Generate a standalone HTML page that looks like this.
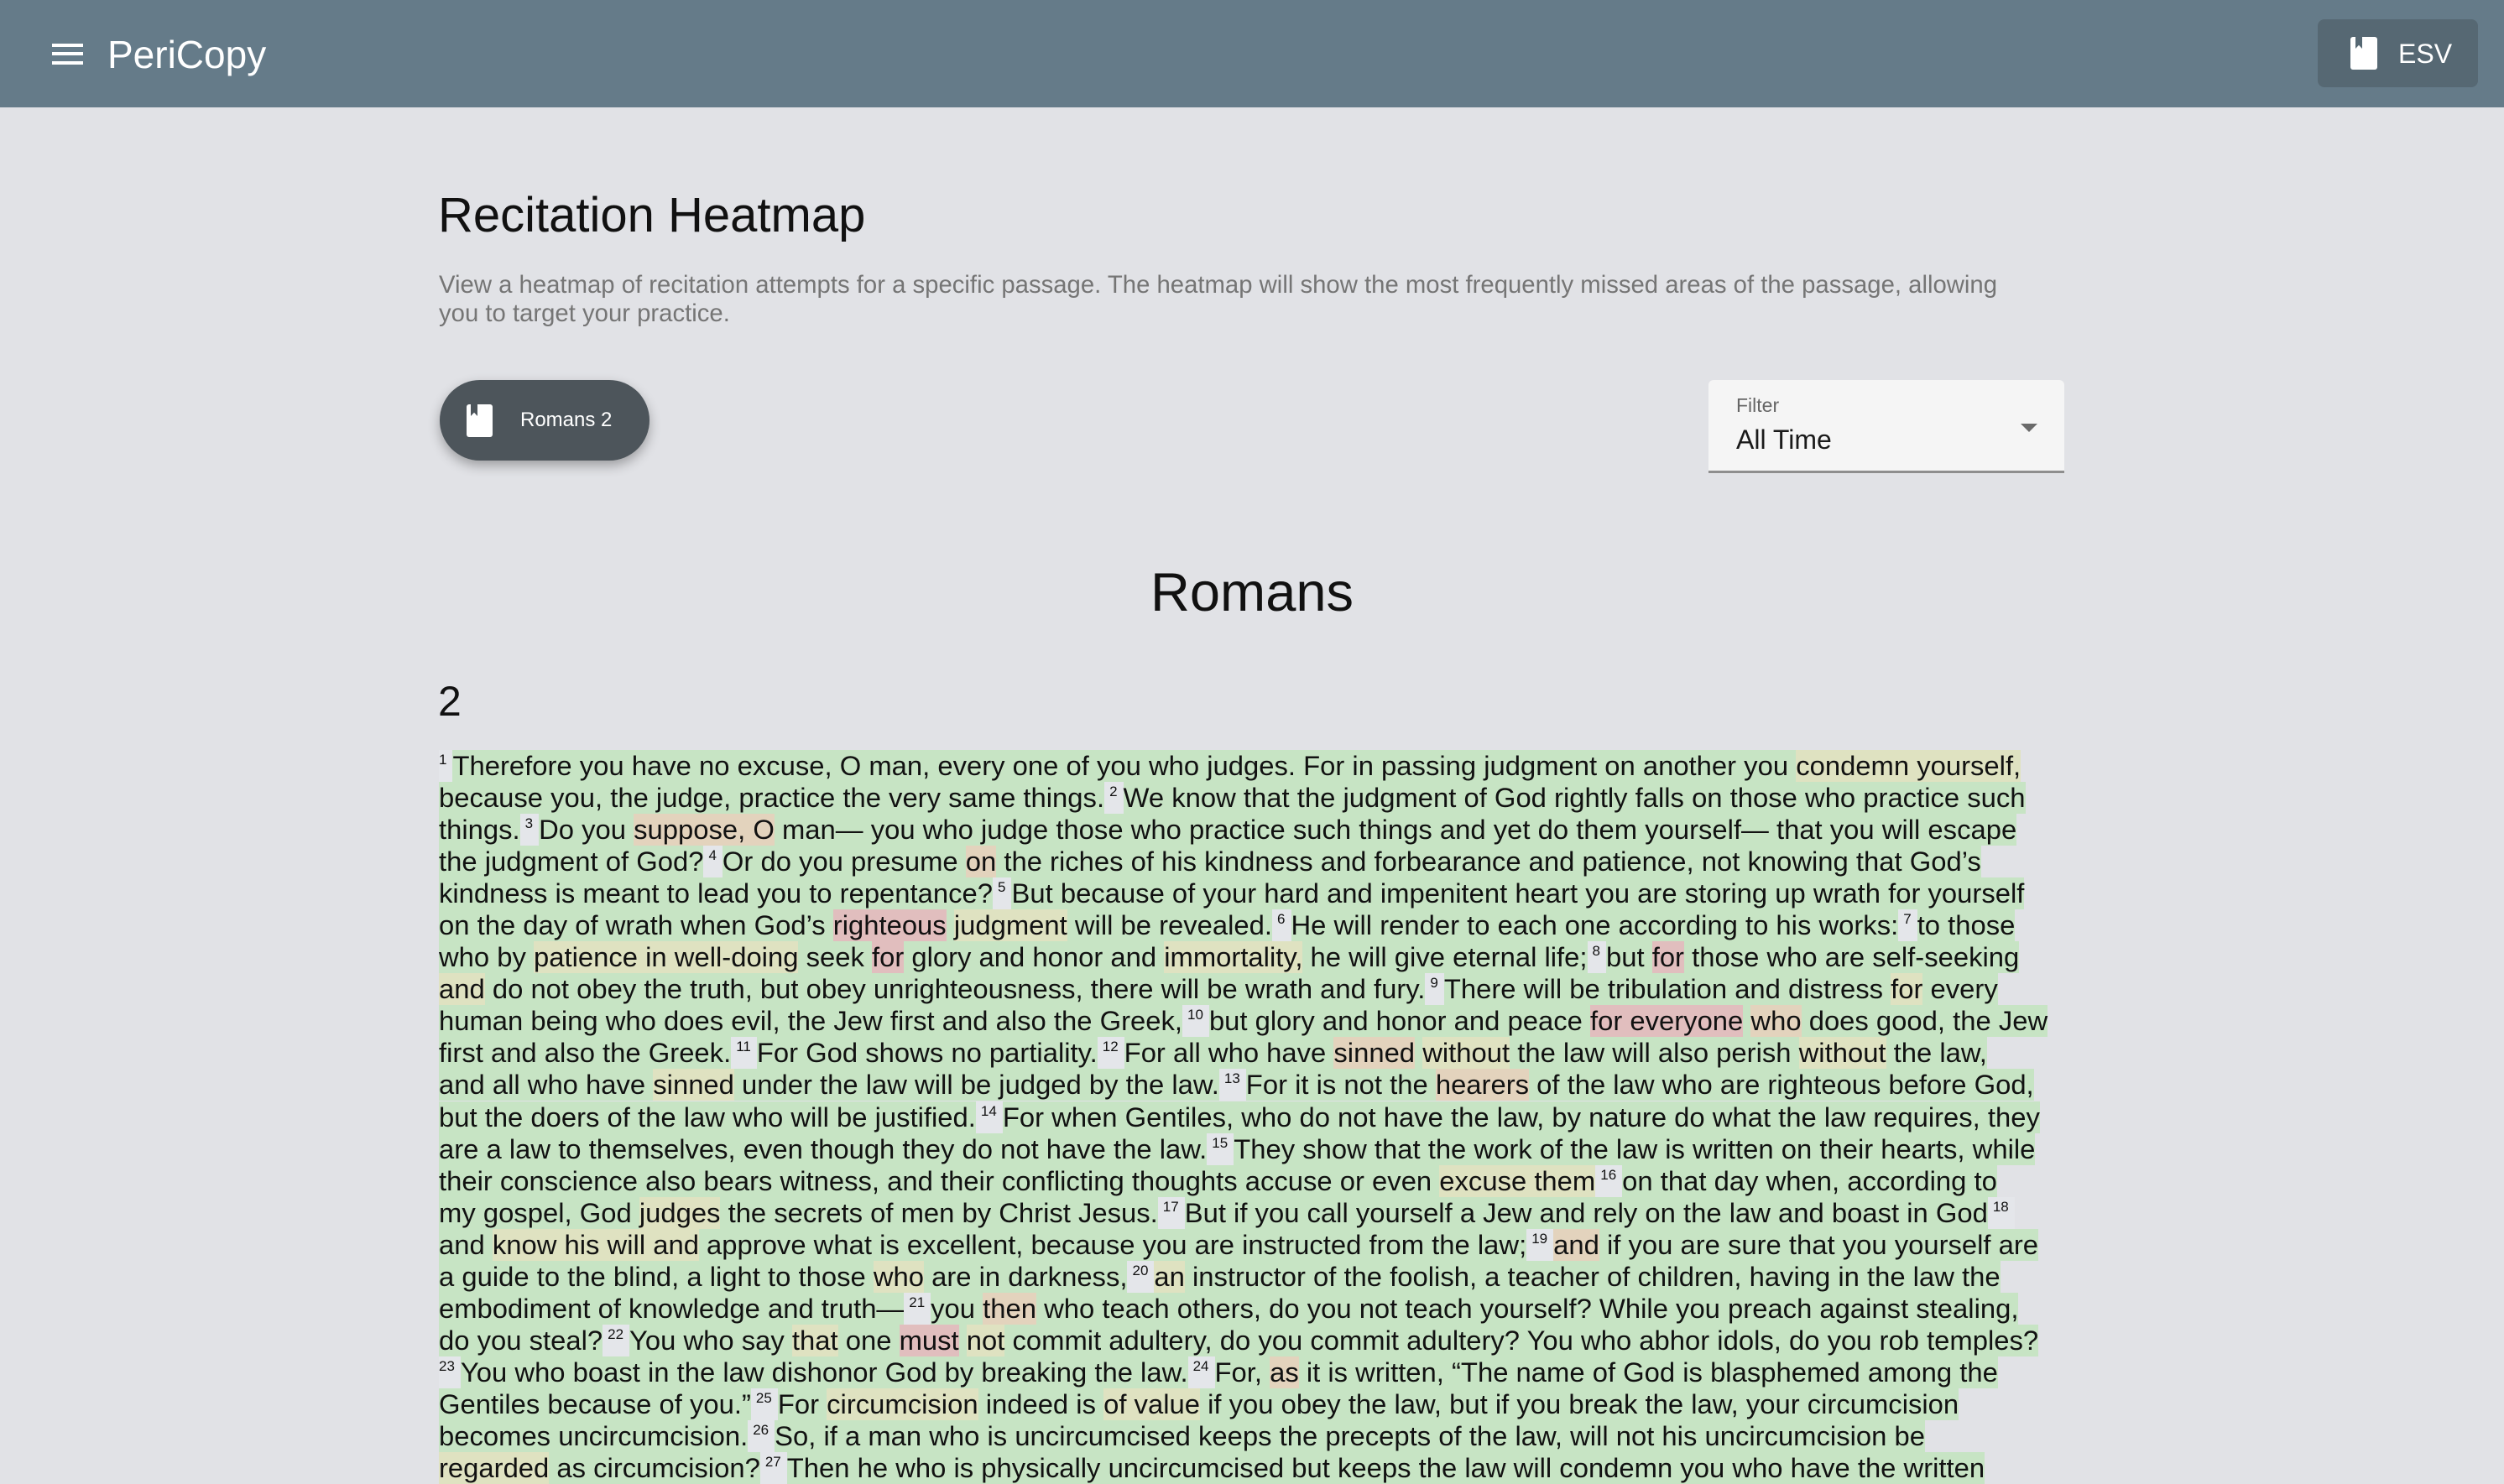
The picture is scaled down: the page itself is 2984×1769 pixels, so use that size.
<!DOCTYPE html>
<html><head><meta charset="utf-8">
<style>
*{margin:0;padding:0;box-sizing:border-box}
html,body{width:2984px;height:1768px;overflow:hidden;background:#e1e2e6;font-family:"Liberation Sans",sans-serif;color:#111}
.hdr{position:absolute;left:0;top:0;width:2984px;height:128px;background:#657b89}
.ham{position:absolute;left:62px;width:37px;height:4px;background:#fff}
.logo{position:absolute;left:128px;top:37px;font-size:46px;color:#fff;line-height:56px}
.esv{position:absolute;left:2762px;top:23px;width:191px;height:81px;background:#566873;border-radius:8px}
.esv .ic{position:absolute;left:39px;top:21px;width:32px;height:39px;background:#fff;border-radius:3px}
.esv .bm{position:absolute;left:6px;top:0;width:8px;height:14px;background:#566873;clip-path:polygon(0 0,100% 0,100% 100%,50% 70%,0 100%)}
.esv .tx{position:absolute;left:96px;top:22px;font-size:32px;color:#fff;line-height:38px}
h1{position:absolute;left:522px;top:222px;font-size:58px;font-weight:normal;line-height:70px;color:#111}
.desc{position:absolute;left:523px;top:323px;width:2000px;font-size:29.3px;line-height:34px;color:#757575;white-space:nowrap}
.btn{position:absolute;left:524px;top:453px;width:250px;height:96px;border-radius:48px;background:#4d555b;box-shadow:0 6px 14px rgba(0,0,0,.3)}
.btn .ic{position:absolute;left:32px;top:29px;width:31px;height:39px;background:#fff;border-radius:3px}
.btn .bm{position:absolute;left:5px;top:0;width:8px;height:14px;background:#4d555b;clip-path:polygon(0 0,100% 0,100% 100%,50% 70%,0 100%)}
.btn .tx{position:absolute;left:96px;top:34px;font-size:24px;color:#fff;line-height:28px}
.flt{position:absolute;left:2036px;top:453px;width:424px;height:111px;background:#f5f5f5;border-radius:6px 6px 0 0;border-bottom:3px solid #8e8e8e}
.flt .lb{position:absolute;left:33px;top:17px;font-size:23px;color:#666}
.flt .vl{position:absolute;left:33px;top:53px;font-size:32px;color:#1a1a1a}
.flt .ar{position:absolute;left:372px;top:52px;width:0;height:0;border-left:10px solid transparent;border-right:10px solid transparent;border-top:10px solid #6a6a6a}
.bk{position:absolute;left:0;width:2984px;top:666px;text-align:center;font-size:65px;line-height:80px}
.ch{position:absolute;left:522px;top:804px;font-size:50px;line-height:64px}
.txt{position:absolute;left:523px;top:894px;font-size:32.8px}
.l{height:38.05px;line-height:38px;white-space:nowrap}
.t{display:inline-block;height:38px;background:#c7e4c4;vertical-align:top}
.y{display:inline-block;height:38px;background:#dfe2c1}
.o{display:inline-block;height:38px;background:#e3d3bd}
.r{display:inline-block;height:38px;background:#e1bebe}
.v{display:inline-block;height:38px;background:#e4e6ea;font-size:17px;line-height:24px;vertical-align:top;padding:0 7px 0 6px}
.l>.v:first-child{padding-left:0}
</style></head><body>
<div class="hdr">
<div class="ham" style="top:52px"></div><div class="ham" style="top:62px"></div><div class="ham" style="top:73px"></div>
<div class="logo">PeriCopy</div>
<div class="esv"><div class="ic"><div class="bm"></div></div><div class="tx">ESV</div></div>
</div>
<h1>Recitation Heatmap</h1>
<div class="desc">View a heatmap of recitation attempts for a specific passage. The heatmap will show the most frequently missed areas of the passage, allowing<br>you to target your practice.</div>
<div class="btn"><div class="ic"><div class="bm"></div></div><div class="tx">Romans 2</div></div>
<div class="flt"><div class="lb">Filter</div><div class="vl">All Time</div><div class="ar"></div></div>
<div class="bk">Romans</div>
<div class="ch">2</div>
<div class="txt">
<div class="l"><span class="v">1</span><span class="t">Therefore you have no excuse, O man, every one of you who judges. For in passing judgment on another you <span class="y">condemn yourself,</span></span></div>
<div class="l"><span class="t">because you, the judge, practice the very same things.</span><span class="v">2</span><span class="t">We know that the judgment of God rightly falls on those who practice such</span></div>
<div class="l"><span class="t">things.</span><span class="v">3</span><span class="t">Do you <span class="o">suppose, O</span> man— you who judge those who practice such things and yet do them yourself— that you will escape</span></div>
<div class="l"><span class="t">the judgment of God?</span><span class="v">4</span><span class="t">Or do you presume <span class="o">on</span> the riches of his kindness and forbearance and patience, not knowing that God’s</span></div>
<div class="l"><span class="t">kindness is meant to lead you to repentance?</span><span class="v">5</span><span class="t">But because of your hard and impenitent heart you are storing up wrath for yourself</span></div>
<div class="l"><span class="t">on the day of wrath when God’s <span class="r">righteous</span> <span class="y">judgment</span> will be revealed.</span><span class="v">6</span><span class="t">He will render to each one according to his works:</span><span class="v">7</span><span class="t">to those</span></div>
<div class="l"><span class="t">who by <span class="y">patience in well-doing</span> seek <span class="r">for</span> glory and honor and <span class="y">immortality,</span> he will give eternal life;</span><span class="v">8</span><span class="t">but <span class="r">for</span> those who are self-seeking</span></div>
<div class="l"><span class="t"><span class="y">and</span> do not obey the truth, but obey unrighteousness, there will be wrath and fury.</span><span class="v">9</span><span class="t">There will be tribulation and distress <span class="y">for</span> every</span></div>
<div class="l"><span class="t">human being who does evil, the Jew first and also the Greek,</span><span class="v">10</span><span class="t">but glory and honor and peace <span class="r">for everyone</span> <span class="o">who</span> does good, the Jew</span></div>
<div class="l"><span class="t">first and also the Greek.</span><span class="v">11</span><span class="t">For God shows no partiality.</span><span class="v">12</span><span class="t">For all who have <span class="o">sinned</span> <span class="y">without</span> the law will also perish <span class="y">without</span> the law,</span></div>
<div class="l"><span class="t">and all who have <span class="y">sinned</span> under the law will be judged by the law.</span><span class="v">13</span><span class="t">For it is not the <span class="o">hearers</span> of the law who are righteous before God,</span></div>
<div class="l"><span class="t">but the doers of the law who will be justified.</span><span class="v">14</span><span class="t">For when Gentiles, who do not have the law, by nature do what the law requires, they</span></div>
<div class="l"><span class="t">are a law to themselves, even though they do not have the law.</span><span class="v">15</span><span class="t">They show that the work of the law is written on their hearts, while</span></div>
<div class="l"><span class="t">their conscience also bears witness, and their conflicting thoughts accuse or even <span class="y">excuse them</span></span><span class="v">16</span><span class="t">on that day when, according to</span></div>
<div class="l"><span class="t">my gospel, God <span class="y">judges</span> the secrets of men by Christ Jesus.</span><span class="v">17</span><span class="t">But if you call yourself a Jew and rely on the law and boast in God</span><span class="v">18</span></div>
<div class="l"><span class="t">and <span class="y">know his will and</span> approve what is excellent, because you are instructed from the law;</span><span class="v">19</span><span class="t"><span class="o">and</span> if you are sure that you yourself are</span></div>
<div class="l"><span class="t">a guide to the blind, a light to those <span class="y">who</span> are in darkness,</span><span class="v">20</span><span class="t"><span class="y">an</span> instructor of the foolish, a teacher of children, having in the law the</span></div>
<div class="l"><span class="t">embodiment of knowledge and truth—</span><span class="v">21</span><span class="t">you <span class="o">then</span> who teach others, do you not teach yourself? While you preach against stealing,</span></div>
<div class="l"><span class="t">do you steal?</span><span class="v">22</span><span class="t">You who say <span class="y">that</span> one <span class="r">must</span> <span class="y">not</span> commit adultery, do you commit adultery? You who abhor idols, do you rob temples?</span></div>
<div class="l"><span class="v">23</span><span class="t">You who boast in the law dishonor God by breaking the law.</span><span class="v">24</span><span class="t">For, <span class="o">as</span> it is written, “The name of God is blasphemed among the</span></div>
<div class="l"><span class="t">Gentiles because of you.”</span><span class="v">25</span><span class="t">For <span class="y">circumcision</span> indeed is <span class="y">of value</span> if you obey the law, but if you break the law, your circumcision</span></div>
<div class="l"><span class="t">becomes uncircumcision.</span><span class="v">26</span><span class="t">So, if a man who is uncircumcised keeps the precepts of the law, will not his uncircumcision be</span></div>
<div class="l"><span class="t"><span class="y">regarded</span> as circumcision?</span><span class="v">27</span><span class="t">Then he who is physically uncircumcised but keeps the law will condemn you who have the written</span></div>
</div>
</body></html>
